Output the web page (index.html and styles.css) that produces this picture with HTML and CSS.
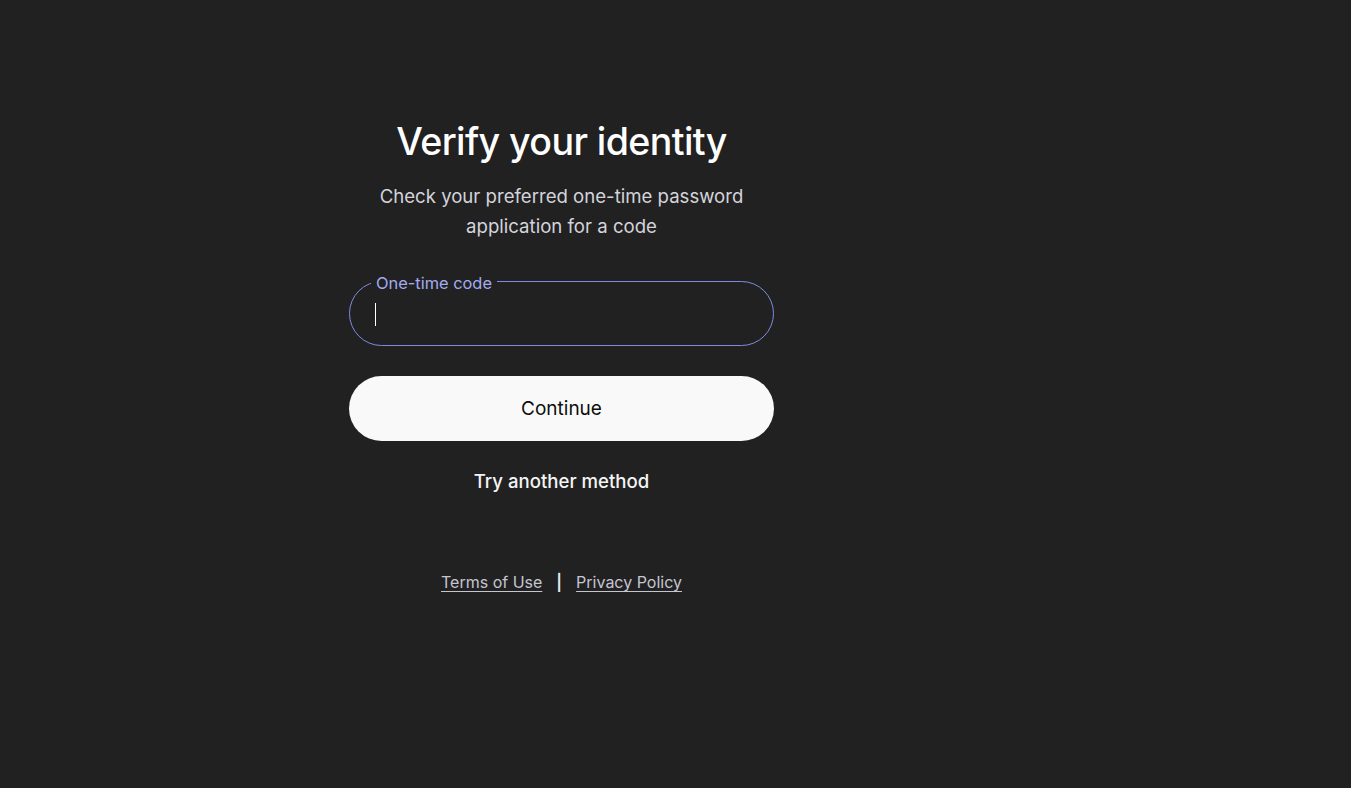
FILE: index.html
```html
<!DOCTYPE html>
<html lang="en">
	<head>
		<meta charset="UTF-8" />
		<meta name="viewport" content="width=device-width, initial-scale=1.0" />
		<title>Verify your identity</title>
		<link rel="stylesheet" href="styles.css">
	</head>
	<body>
		<main class="page">
			<section class="panel">
				<h1 class="title">Verify your identity</h1>
				<p class="subtitle">Check your preferred one-time password application for a code</p>

				<form class="otp-form">
					<div class="field">
						<label class="field-label" for="code">One-time code</label>
						<span class="caret"></span>
					</div>
					<button type="button" class="primary-btn">Continue</button>
				</form>

				<a href="#" class="alt-link">Try another method</a>

				<footer class="legal">
					<a href="#">Terms of Use</a>
					<span class="sep">|</span>
					<a href="#">Privacy Policy</a>
				</footer>
			</section>
		</main>
	</body>
</html>
```

FILE: styles.css
```css
html, body {
	margin: 0;
	background: #212121;
	height: 100%;
}

body {
	font-family: Inter, "Noto Sans", sans-serif;
	color: #ececf1;
}

.page {
	padding-top: 114px;
	padding-left: 349px;
}

.panel {
	width: 425px;
	display: flex;
	flex-direction: column;
	align-items: center;
	text-align: center;
}

.title {
	margin: 0;
	font-size: 37.6px;
	font-weight: 500;
	line-height: 56px;
	letter-spacing: -0.6px;
	color: #ffffff;
}

.subtitle {
	margin: 11px 0 0;
	width: 380px;
	font-size: 18.6px;
	line-height: 30px;
	color: #d4d4dc;
}

.otp-form {
	width: 100%;
	margin-top: 40px;
	display: flex;
	flex-direction: column;
	gap: 30px;
}

.field {
	position: relative;
	height: 65px;
	box-sizing: border-box;
	border: 1px solid #7d8ce0;
	border-radius: 33px;
	padding: 0 25px;
	display: flex;
	align-items: center;
}

.field-label {
	position: absolute;
	top: -8px;
	left: 21px;
	padding: 0 5px;
	background: #212121;
	font-size: 16.4px;
	line-height: 18px;
	color: #a3abf0;
}

.caret {
	display: block;
	width: 1px;
	height: 23px;
	background: #ffffff;
	margin-top: 1px;
}

.primary-btn {
	height: 65px;
	border: none;
	border-radius: 33px;
	background: #f9f9f9;
	color: #0d0d0d;
	font-family: inherit;
	font-size: 19px;
	cursor: pointer;
}

.alt-link {
	margin-top: 29px;
	font-size: 18.6px;
	font-weight: 500;
	color: #f4f4f6;
	text-decoration: none;
}

.legal {
	margin-top: 80px;
	display: flex;
	gap: 14px;
	font-size: 16px;
	color: #c5c5d2;
}

.legal a {
	color: #c5c5d2;
	text-decoration: underline;
	text-underline-offset: 3px;
}

.sep {
	color: #ececf1;
	font-weight: 600;
}
```
